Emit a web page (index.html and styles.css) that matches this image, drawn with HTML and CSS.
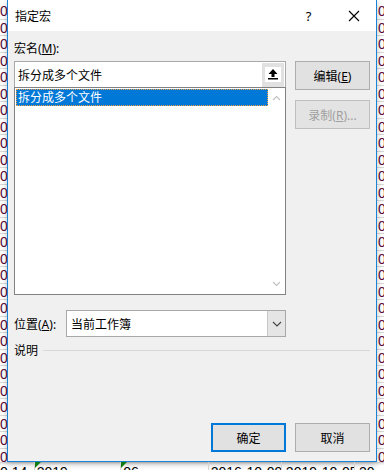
FILE: index.html
```html
<!DOCTYPE html>
<html lang="zh-CN">
<head>
    <meta charset="UTF-8">
    <title>指定宏</title>
    <link rel="stylesheet" href="styles.css">
</head>
<body>

    <div class="screen">
        <div class="sheet-col left">
            <div class="cell">0</div><div class="cell">0</div><div class="cell">0</div><div class="cell">0</div>
            <div class="cell">0</div><div class="cell">0</div><div class="cell">0</div><div class="cell">0</div>
            <div class="cell">0</div><div class="cell">0</div><div class="cell">0</div><div class="cell">0</div>
            <div class="cell">0</div><div class="cell">0</div><div class="cell">0</div><div class="cell">0</div>
            <div class="cell">0</div><div class="cell">0</div><div class="cell">0</div><div class="cell">0</div>
            <div class="cell">0</div><div class="cell">0</div><div class="cell">0</div><div class="cell">0</div>
            <div class="cell">0</div><div class="cell">0</div><div class="cell">0</div><div class="cell">0</div>
        </div>

        <div class="dialog">
            <div class="titlebar">
                <span class="title">指定宏</span>
                <span class="tb-btn">?</span>
                <span class="tb-btn">
                    <svg width="12" height="12" viewBox="0 0 12 12"><path d="M1 1 L11 11 M11 1 L1 11" stroke="#000" stroke-width="1.1" fill="none"/></svg>
                </span>
            </div>

            <div class="content">
                <div class="label">宏名(<u>M</u>):</div>

                <div class="main">
                    <div class="macro-col">
                        <div class="name-input">
                            <span class="value">拆分成多个文件</span>
                            <span class="up-btn">
                                <svg width="16" height="15" viewBox="0 0 16 15">
                                    <rect width="16" height="15" fill="#fff"/>
                                    <path d="M8 2 L3.5 7 H6.5 V10 H9.5 V7 H12.5 Z" fill="#000"/>
                                    <rect x="3" y="11" width="10" height="1.5" fill="#000"/>
                                </svg>
                            </span>
                        </div>
                        <div class="listbox">
                            <div class="items">
                                <div class="item selected">拆分成多个文件</div>
                            </div>
                            <div class="vscroll">
                                <svg width="9" height="6" viewBox="0 0 9 6"><path d="M1 5 L4.5 1.5 L8 5" stroke="#c2c2c2" stroke-width="1.2" fill="none"/></svg>
                                <svg width="9" height="6" viewBox="0 0 9 6"><path d="M1 1 L4.5 4.5 L8 1" stroke="#c2c2c2" stroke-width="1.2" fill="none"/></svg>
                            </div>
                        </div>
                    </div>

                    <div class="side-buttons">
                        <button class="btn">编辑(<u>E</u>)</button>
                        <button class="btn" disabled>录制(<u>R</u>)...</button>
                    </div>
                </div>

                <div class="location-row">
                    <span class="loc-label">位置(<u>A</u>):</span>
                    <div class="combo">
                        <span class="value">当前工作簿</span>
                        <span class="drop">
                            <svg width="10" height="6" viewBox="0 0 10 6"><path d="M1 1 L5 5 L9 1" stroke="#444" stroke-width="1.1" fill="none"/></svg>
                        </span>
                    </div>
                </div>

                <div class="desc">
                    <span>说明</span>
                    <span class="rule"></span>
                </div>

                <div class="footer">
                    <button class="btn default">确定</button>
                    <button class="btn">取消</button>
                </div>
            </div>
        </div>

        <div class="sheet-col right">
            <div class="cell">0</div><div class="cell">0</div><div class="cell">0</div><div class="cell">0</div>
            <div class="cell">0</div><div class="cell">0</div><div class="cell">0</div><div class="cell">0</div>
            <div class="cell">0</div><div class="cell">0</div><div class="cell">0</div><div class="cell">0</div>
            <div class="cell">0</div><div class="cell">0</div><div class="cell">0</div><div class="cell">0</div>
            <div class="cell">0</div><div class="cell">0</div><div class="cell">0</div><div class="cell">0</div>
            <div class="cell">0</div><div class="cell">0</div><div class="cell">0</div><div class="cell">0</div>
            <div class="cell">0</div><div class="cell">0</div><div class="cell">0</div><div class="cell">0</div>
        </div>
    </div>

    <div class="sheet-row">
        <div class="rcell c1">0.14</div>
        <div class="rcell c2 flag">2019</div>
        <div class="rcell c3 flag">06</div>
        <div class="rcell c4">2016-10-09</div>
        <div class="rcell c5">2019-10-05</div>
        <div class="rcell c6">20</div>
    </div>

</body>
</html>
```

FILE: styles.css
```css
body {
    margin: 0;
    width: 384px;
    height: 470px;
    overflow: hidden;
    background: #fff;
    font-family: "Noto Sans", "Noto Sans CJK SC", sans-serif;
    font-size: 12px;
    color: #000;
}

.screen {
    display: flex;
    height: 462px;
}

/* spreadsheet behind the dialog */
.sheet-col {
    width: 7px;
    overflow: hidden;
    font-family: "Liberation Sans", sans-serif;
    font-size: 14px;
    color: #5a0a3a;
    padding-top: 3px;
}

.sheet-col .cell {
    height: 15.5px;
    line-height: 16px;
    border-bottom: 1px solid #d8d8d8;
}

.sheet-col.left .cell {
    text-align: right;
}

.sheet-col.right .cell {
    padding-left: 1px;
}

.sheet-row {
    display: flex;
    height: 8px;
    overflow: hidden;
    font-family: "Liberation Sans", sans-serif;
    font-size: 14px;
    line-height: 16px;
    box-shadow: inset 0 3px 3px -2px rgba(0, 0, 0, 0.25);
}

.rcell {
    border-right: 1px solid #d4d4d4;
    padding-top: 2px;
    padding-left: 2px;
    box-sizing: border-box;
    position: relative;
    white-space: nowrap;
    overflow: hidden;
}

.rcell.flag::before {
    content: "";
    position: absolute;
    left: 0;
    top: 0;
    border-top: 6px solid #107c10;
    border-right: 6px solid transparent;
}

.c1 { width: 36px; padding-left: 0; }
.c2 { width: 90px; }
.c3 { width: 91px; }
.c4 { width: 76px; }
.c5 { width: 76px; padding-left: 4px; }
.c6 { width: 30px; padding-left: 4px; border-right: none; }

/* dialog */
.dialog {
    width: 370px;
    box-sizing: border-box;
    border: 1px solid #1883d7;
    border-top: none;
    background: #f0f0f0;
    display: flex;
    flex-direction: column;
    box-shadow: 0 2px 6px rgba(0, 0, 0, 0.25);
    position: relative;
}

.titlebar {
    height: 31px;
    background: #fff;
    display: flex;
    align-items: center;
}

.title {
    flex: 1;
    padding-left: 7px;
    padding-top: 1px;
}

.tb-btn {
    width: 45px;
    height: 31px;
    display: flex;
    align-items: center;
    justify-content: center;
    font-size: 13px;
}

.content {
    flex: 1;
    display: flex;
    flex-direction: column;
    padding: 10px 6px 9px 6px;
}

.label {
    line-height: 16px;
    height: 16px;
    margin-bottom: 4px;
}

.main {
    display: flex;
    gap: 9px;
}

.macro-col {
    width: 272px;
    display: flex;
    flex-direction: column;
}

.name-input {
    height: 26px;
    box-sizing: border-box;
    border: 1px solid #a8a8a8;
    border-bottom: none;
    background: #fff;
    display: flex;
    align-items: center;
    padding-left: 3px;
}

.name-input .value {
    flex: 1;
}

.up-btn {
    width: 22px;
    height: 24px;
    background: #e1e1e1;
    display: flex;
    align-items: center;
    justify-content: center;
    margin-right: 1px;
}

.listbox {
    height: 208px;
    box-sizing: border-box;
    border: 1px solid #828282;
    background: #fff;
    display: flex;
}

.items {
    flex: 1;
    padding: 1px 0 0 1px;
}

.item {
    height: 17px;
    line-height: 17px;
    padding-left: 2px;
}

.item.selected {
    background: #0078d7;
    color: #fff;
    outline: 1px dotted #f0a040;
    outline-offset: -1px;
}

.vscroll {
    width: 17px;
    display: flex;
    flex-direction: column;
    justify-content: space-between;
    align-items: center;
    padding: 7px 0 7px 0;
}

.side-buttons {
    width: 75px;
    display: flex;
    flex-direction: column;
    gap: 10px;
}

.btn {
    height: 29px;
    width: 75px;
    box-sizing: border-box;
    background: #e1e1e1;
    border: 1px solid #adadad;
    font-family: "Noto Sans", "Noto Sans CJK SC", sans-serif;
    font-size: 12px;
    color: #000;
    padding: 0;
}

.btn:disabled {
    color: #a0a0a0;
    border-color: #bfbfbf;
    background: #e3e3e3;
}

.btn.default {
    border: 2px solid #0078d7;
}

.location-row {
    display: flex;
    align-items: center;
    margin-top: 15px;
}

.loc-label {
    width: 52px;
}

.combo {
    width: 220px;
    height: 27px;
    box-sizing: border-box;
    border: 1px solid #a8a8a8;
    background: #fff;
    display: flex;
    align-items: center;
    padding-left: 4px;
}

.combo .value {
    flex: 1;
}

.drop {
    width: 17px;
    height: 25px;
    background: #e5e5e5;
    border-left: 1px solid #c8c8c8;
    display: flex;
    align-items: center;
    justify-content: center;
}

.desc {
    display: flex;
    align-items: center;
    gap: 5px;
    margin-top: 5px;
    height: 16px;
}

.rule {
    flex: 1;
    height: 1px;
    background: #d8d8d8;
}

.footer {
    margin-top: auto;
    display: flex;
    justify-content: flex-end;
    gap: 9px;
}
```
